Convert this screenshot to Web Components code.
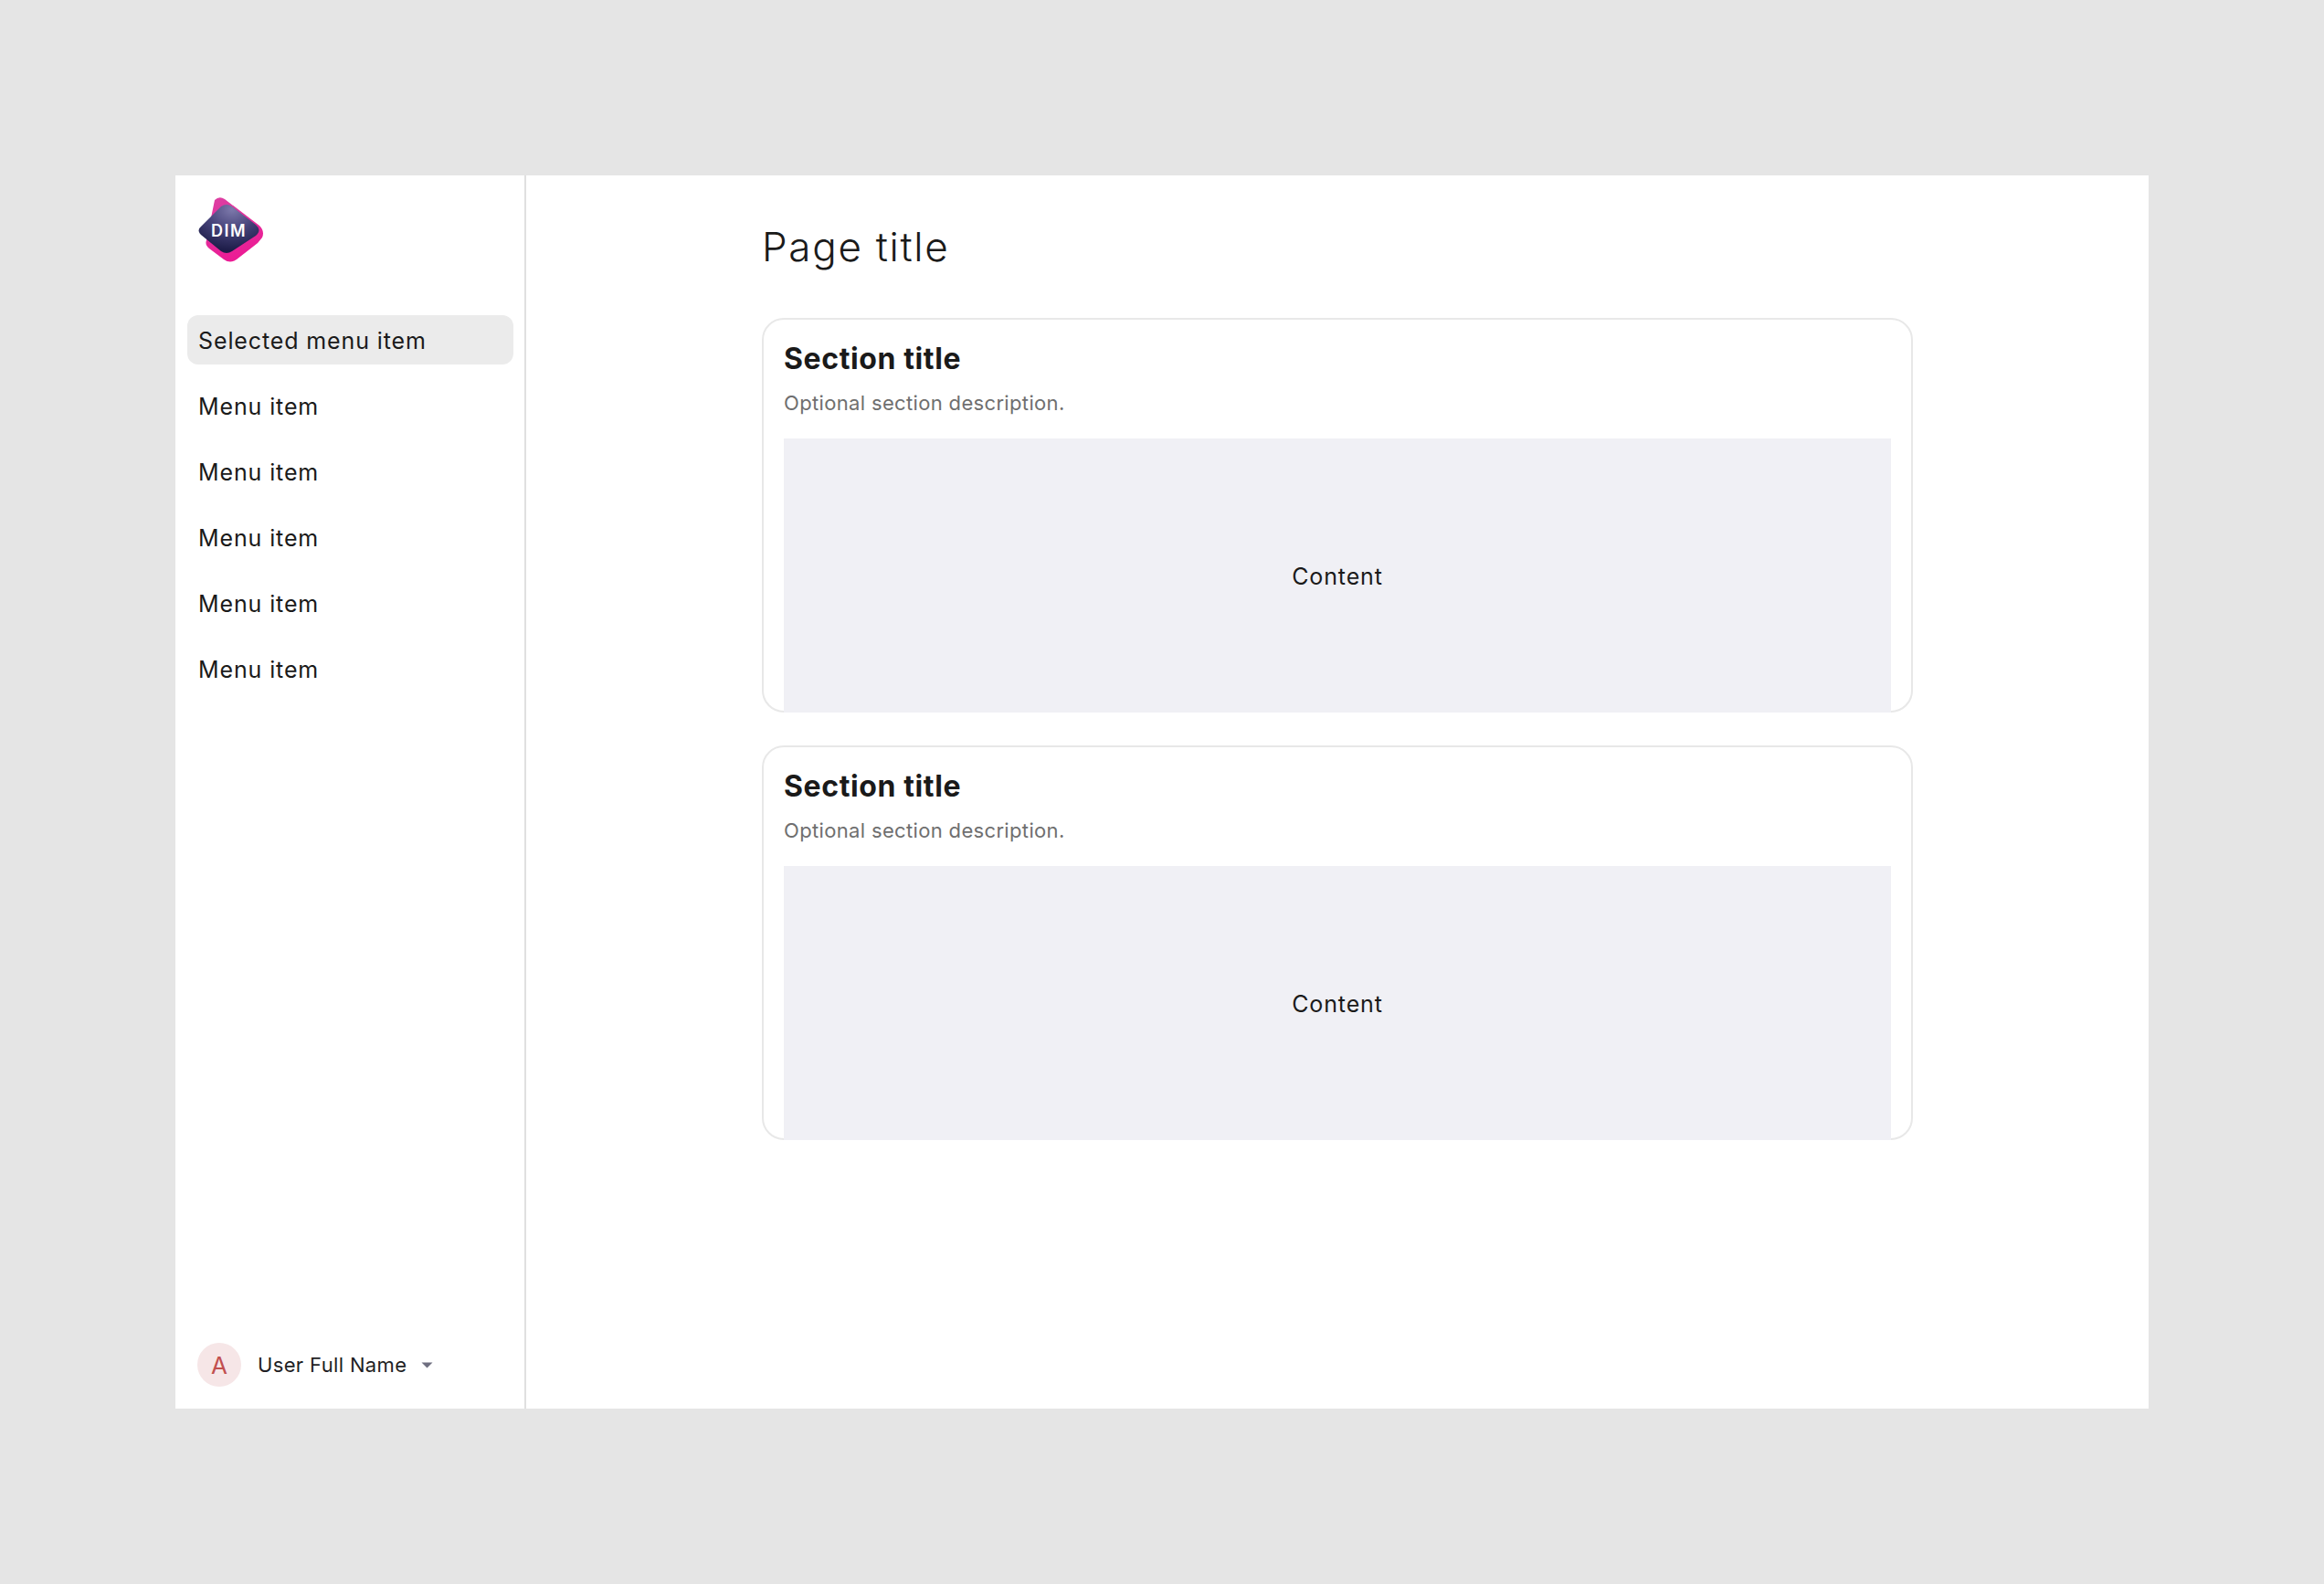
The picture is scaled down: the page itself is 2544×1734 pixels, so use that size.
<!DOCTYPE html>
<html>
<head>
<meta charset="utf-8">
<title>Page</title>
<style>
  html, body { margin: 0; height: 100%; }
  body {
    background: #e5e5e5;
    font-family: Inter, "Liberation Sans", sans-serif;
    color: #1a1a1a;
    display: flex;
    align-items: center;
    justify-content: center;
    min-height: 1734px;
  }
</style>
</head>
<body>
<app-shell>
  <app-sidebar slot="sidebar" user="User Full Name" initial="A">
    <menu-item selected>Selected menu item</menu-item>
    <menu-item>Menu item</menu-item>
    <menu-item>Menu item</menu-item>
    <menu-item>Menu item</menu-item>
    <menu-item>Menu item</menu-item>
    <menu-item>Menu item</menu-item>
  </app-sidebar>
  <page-main heading="Page title">
    <section-card heading="Section title" description="Optional section description.">Content</section-card>
    <section-card heading="Section title" description="Optional section description.">Content</section-card>
  </page-main>
</app-shell>

<script>
class AppShell extends HTMLElement {
  connectedCallback() {
    this.attachShadow({ mode: 'open' });
    this.shadowRoot.innerHTML = `
      <style>
        :host {
          display: flex;
          width: 2160px;
          height: 1350px;
          background: #fff;
        }
      </style>
      <slot name="sidebar"></slot>
      <slot></slot>
    `;
  }
}
customElements.define('app-shell', AppShell);

class AppSidebar extends HTMLElement {
  connectedCallback() {
    this.attachShadow({ mode: 'open' });
    this.shadowRoot.innerHTML = `
      <style>
        :host {
          display: flex;
          flex-direction: column;
          box-sizing: border-box;
          width: 384px;
          height: 100%;
          flex: none;
          border-right: 2px solid #e0e0e0;
          padding: 24px 12px 24px 13px;
        }
        .logo { display: block; margin-left: 11px; height: 72px; overflow: visible; }
        nav { display: flex; flex-direction: column; gap: 18px; margin-top: 57px; flex: 1; }
        .user { display: flex; align-items: center; margin-left: 11px; height: 48px; }
        .avatar {
          width: 48px; height: 48px; border-radius: 50%;
          background: #f6e6e7; color: #c2504f;
          display: flex; align-items: center; justify-content: center;
          font-size: 26px; font-weight: 400;
        }
        .name { margin-left: 18px; font-size: 22px; letter-spacing: 0.35px; color: #1f1f24; white-space: nowrap; }
        svg.caret { margin-left: 16px; display: block; }
      </style>
      <svg class="logo" width="72" height="72" viewBox="0 0 72 72" aria-label="DIM logo">
        <defs>
          <linearGradient id="pink" x1="0.2" y1="0" x2="0.5" y2="1">
            <stop offset="0" stop-color="#dd3fa2"/>
            <stop offset="1" stop-color="#ec1a94"/>
          </linearGradient>
          <radialGradient id="dark" cx="0.55" cy="0.1" r="0.85">
            <stop offset="0" stop-color="#7d79ab"/>
            <stop offset="0.5" stop-color="#46437a"/>
            <stop offset="1" stop-color="#1d1c48"/>
          </radialGradient>
        </defs>
        <path d="M19 3 Q24 -2 30 2 L68 31 Q74 37 71 44 Q67 50 61 54 L43 68 Q36 73 29 68 L13 56 Q8 52 10 47 Z" fill="url(#pink)"/>
        <path d="M26 10 Q32 6 38 10 L64 30 Q71 36 64 42 L38 59 Q32 63 26 59 L4 41 Q-1 36 4 32 Z" fill="url(#dark)"/>
        <text x="34.5" y="42.5" text-anchor="middle" font-family="Inter, 'Liberation Sans', sans-serif" font-weight="600" font-size="18" letter-spacing="1.5" fill="#fff">DIM</text>
      </svg>
      <nav><slot></slot></nav>
      <div class="user">
        <div class="avatar">${this.getAttribute('initial')}</div>
        <div class="name">${this.getAttribute('user')}</div>
        <svg class="caret" width="13" height="7" viewBox="0 0 13 7"><path d="M0.5 0.5 H12.5 L6.5 6.5 Z" fill="#6f6f80"/></svg>
      </div>
    `;
  }
}
customElements.define('app-sidebar', AppSidebar);

class MenuItem extends HTMLElement {
  connectedCallback() {
    this.attachShadow({ mode: 'open' });
    this.shadowRoot.innerHTML = `
      <style>
        :host {
          display: flex;
          align-items: center;
          box-sizing: border-box;
          height: 54px;
          padding: 2px 12px 0;
          border-radius: 12px;
          font-size: 25px;
          letter-spacing: 0.88px;
          color: #1a1a1a;
        }
        :host([selected]) { background: #ebebeb; }
      </style>
      <slot></slot>
    `;
  }
}
customElements.define('menu-item', MenuItem);

class PageMain extends HTMLElement {
  connectedCallback() {
    this.attachShadow({ mode: 'open' });
    this.shadowRoot.innerHTML = `
      <style>
        :host {
          display: flex;
          flex-direction: column;
          align-items: center;
          flex: 1;
          box-sizing: border-box;
          padding-top: 48px;
        }
        .col { width: 1260px; display: flex; flex-direction: column; gap: 36px; }
        h1 { margin: 0 0 12px; font-size: 44px; line-height: 60px; font-weight: 300; letter-spacing: 1.7px; color: #1a1a1a; }
      </style>
      <div class="col">
        <h1>${this.getAttribute('heading')}</h1>
        <slot></slot>
      </div>
    `;
  }
}
customElements.define('page-main', PageMain);

class SectionCard extends HTMLElement {
  connectedCallback() {
    this.attachShadow({ mode: 'open' });
    this.shadowRoot.innerHTML = `
      <style>
        :host {
          display: flex;
          flex-direction: column;
          box-sizing: border-box;
          height: 432px;
          padding: 23px 22px 0;
          border: 2px solid #e8e8e8;
          border-radius: 24px;
        }
        h2 { margin: 0; font-size: 32px; line-height: 40px; font-weight: 700; letter-spacing: 0.6px; color: #1a1a1a; }
        p { margin: 10px 0 0; font-size: 22px; line-height: 36px; letter-spacing: 0.34px; color: #6f6f6f; }
        .content {
          margin-top: 21px;
          margin-bottom: -2px;
          padding-top: 2px;
          flex: 1;
          background: #f0f0f5;
          display: flex;
          align-items: center;
          justify-content: center;
          font-size: 25px;
          letter-spacing: 0.88px;
          color: #1a1a1a;
        }
      </style>
      <h2>${this.getAttribute('heading')}</h2>
      <p>${this.getAttribute('description')}</p>
      <div class="content"><slot></slot></div>
    `;
  }
}
customElements.define('section-card', SectionCard);
</script>
</body>
</html>
